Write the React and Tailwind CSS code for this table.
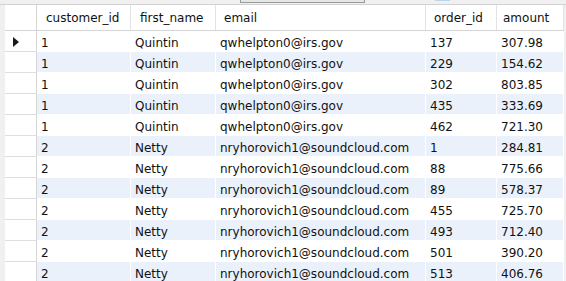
import React from "react";

const rows = [
  ["1", "Quintin", "qwhelpton0@irs.gov", "137", "307.98"],
  ["1", "Quintin", "qwhelpton0@irs.gov", "229", "154.62"],
  ["1", "Quintin", "qwhelpton0@irs.gov", "302", "803.85"],
  ["1", "Quintin", "qwhelpton0@irs.gov", "435", "333.69"],
  ["1", "Quintin", "qwhelpton0@irs.gov", "462", "721.30"],
  ["2", "Netty", "nryhorovich1@soundcloud.com", "1", "284.81"],
  ["2", "Netty", "nryhorovich1@soundcloud.com", "88", "775.66"],
  ["2", "Netty", "nryhorovich1@soundcloud.com", "89", "578.37"],
  ["2", "Netty", "nryhorovich1@soundcloud.com", "455", "725.70"],
  ["2", "Netty", "nryhorovich1@soundcloud.com", "493", "712.40"],
  ["2", "Netty", "nryhorovich1@soundcloud.com", "501", "390.20"],
  ["2", "Netty", "nryhorovich1@soundcloud.com", "513", "406.76"],
];

const widths = ["w-[94px]", "w-[85px]", "w-[210px]", "w-[71px]", "w-[67px]"];
const headers = [
  ["customer_id", "pl-[9px]"],
  ["first_name", "pl-[9px]"],
  ["email", "pl-[8px]"],
  ["order_id", "pl-[8px]"],
  ["amount", "pl-[6px]"],
];

export default function App() {
  return (
    <div className="w-[566px] h-[281px] overflow-hidden bg-[#f0f0f0] flex flex-col text-[12px] text-[#111]" style={{ fontFamily: '"DejaVu Sans", sans-serif' }}>
      {/* toolbar edge peeking in at the top */}
      <div className="h-[4px] flex items-start shrink-0">
        <div className="ml-[240px] w-[125px] h-[3px] bg-[#e6e6e6] border-x border-b border-[#9a9a9a]" />
        <div className="ml-[70px] w-[15px] h-px bg-[#bcd6ee]" />
      </div>
      <div className="h-px bg-[#d2d2d2] shrink-0" />

      <div className="flex flex-1 min-h-0">
        <div className="w-[5px] shrink-0 bg-[#f0f0f0]" />
        <div className="flex flex-col bg-white">
          {/* header */}
          <div className="flex h-[26px] shrink-0 border-b border-[#d5d5d5]">
            <div className="w-[32px] border-r border-[#d5d5d5]" />
            {headers.map(([h, pl], i) => (
              <div key={h} className={`${widths[i]} ${pl} flex items-center border-r border-[#e3e3e3] pt-px`}>
                {h}
              </div>
            ))}
          </div>
          {/* rows */}
          {rows.map((r, ri) => (
            <div key={ri} className="flex h-[21px] shrink-0">
              <div className="w-[32px] border-r border-b border-r-[#d5d5d5] border-b-[#dedede] flex items-center pl-[8px] pt-[2px]">
                {ri === 0 && (
                  <svg width="6" height="10" viewBox="0 0 6 10">
                    <path d="M0 0 L6 5 L0 10 Z" fill="#1a1a1a" />
                  </svg>
                )}
              </div>
              {r.map((c, ci) => (
                <div
                  key={ci}
                  className={`${widths[ci]} pl-[4px] pt-[4px] flex items-center border-r border-b border-white ${ri % 2 === 1 ? "bg-[#eaf1fb]" : "bg-white"}`}
                >
                  {c}
                </div>
              ))}
            </div>
          ))}
        </div>
        <div className="flex-1" />
      </div>
    </div>
  );
}
